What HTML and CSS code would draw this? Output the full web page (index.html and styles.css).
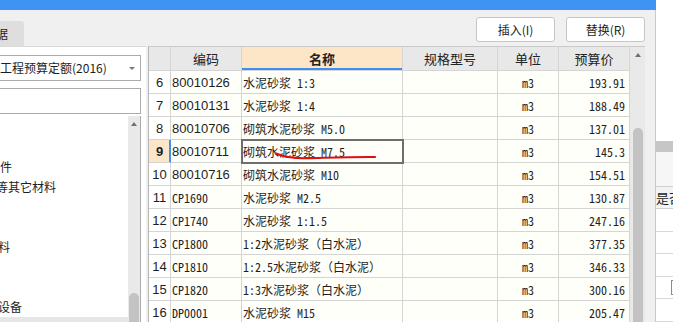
FILE: index.html
```html
<!DOCTYPE html>
<html lang="zh-CN">
<head>
  <meta charset="UTF-8">
  <title>材料替换</title>
  <link rel="stylesheet" href="styles.css">
</head>
<body>
  <div class="screen">
    <div class="window">
      <div class="titlebar"></div>

      <div class="toolbar">
        <div class="tab">据</div>
        <div class="buttons">
          <button class="btn">插入(I)</button>
          <button class="btn">替换(R)</button>
        </div>
      </div>

      <div class="content">
        <div class="left-panel">
          <div class="select">工程预算定额(2016)<span class="caret"></span></div>
          <div class="search"></div>
          <div class="tree">
            <ul class="tree-list">
              <li></li>
              <li></li>
              <li class="near">件</li>
              <li class="deep">等其它材料</li>
              <li></li>
              <li></li>
              <li>料</li>
              <li></li>
              <li></li>
              <li>设备</li>
              <li class="current">专</li>
            </ul>
            <div class="vscroll small">
              <span class="arrow"></span>
              <span class="thumb"></span>
            </div>
          </div>
        </div>

        <div class="grid-wrap">
          <table class="grid">
            <colgroup>
              <col class="c-no">
              <col class="c-code">
              <col class="c-name">
              <col class="c-spec">
              <col class="c-unit">
              <col class="c-price">
            </colgroup>
            <thead>
              <tr>
                <th></th>
                <th>编码</th>
                <th class="sorted">名称</th>
                <th>规格型号</th>
                <th>单位</th>
                <th>预算价</th>
              </tr>
            </thead>
            <tbody>
              <tr>
                <td class="no">6</td><td class="code num">80010126</td><td class="name">水泥砂浆 1:3</td><td></td><td class="unit">m3</td><td class="price">193.91</td>
              </tr>
              <tr>
                <td class="no">7</td><td class="code num">80010131</td><td class="name">水泥砂浆 1:4</td><td></td><td class="unit">m3</td><td class="price">188.49</td>
              </tr>
              <tr>
                <td class="no">8</td><td class="code num">80010706</td><td class="name">砌筑水泥砂浆 M5.0</td><td></td><td class="unit">m3</td><td class="price">137.01</td>
              </tr>
              <tr class="active">
                <td class="no">9</td><td class="code num">80010711</td><td class="name">砌筑水泥砂浆 M7.5</td><td></td><td class="unit">m3</td><td class="price">145.3</td>
              </tr>
              <tr>
                <td class="no">10</td><td class="code num">80010716</td><td class="name">砌筑水泥砂浆 M10</td><td></td><td class="unit">m3</td><td class="price">154.51</td>
              </tr>
              <tr>
                <td class="no">11</td><td class="code">CP1690</td><td class="name">水泥砂浆 M2.5</td><td></td><td class="unit">m3</td><td class="price">130.87</td>
              </tr>
              <tr>
                <td class="no">12</td><td class="code">CP1740</td><td class="name">水泥砂浆 1:1.5</td><td></td><td class="unit">m3</td><td class="price">247.16</td>
              </tr>
              <tr>
                <td class="no">13</td><td class="code">CP1800</td><td class="name">1:2水泥砂浆（白水泥）</td><td></td><td class="unit">m3</td><td class="price">377.35</td>
              </tr>
              <tr>
                <td class="no">14</td><td class="code">CP1810</td><td class="name">1:2.5水泥砂浆（白水泥）</td><td></td><td class="unit">m3</td><td class="price">346.33</td>
              </tr>
              <tr>
                <td class="no">15</td><td class="code">CP1820</td><td class="name">1:3水泥砂浆（白水泥）</td><td></td><td class="unit">m3</td><td class="price">300.16</td>
              </tr>
              <tr>
                <td class="no">16</td><td class="code">DP0001</td><td class="name">水泥砂浆 M15</td><td></td><td class="unit">m3</td><td class="price">205.47</td>
              </tr>
            </tbody>
          </table>
          <div class="vscroll">
            <span class="arrow"></span>
            <span class="thumb"></span>
          </div>
        </div>
      </div>
    </div>

    <div class="side">
      <div class="side-top"></div>
      <div class="side-band"></div>
      <div class="side-bar"></div>
      <div class="side-head">是否</div>
      <div class="side-row"></div>
      <div class="side-row"></div>
      <div class="side-row"></div>
      <div class="side-row"><span class="check"></span></div>
      <div class="side-row"></div>
    </div>
  </div>

  <!-- hand-drawn red underline -->
  <svg class="mark" width="673" height="322" viewBox="0 0 673 322">
    <path d="M276 153.5 C283 156.5 292 158.5 306 158.2 C326 157.8 348 156.8 375 157" fill="none" stroke="#e30d0d" stroke-width="2.2" stroke-linecap="round"/>
  </svg>
</body>
</html>
```

FILE: styles.css
```css
* {
  margin: 0;
  padding: 0;
  box-sizing: border-box;
}

body {
  width: 673px;
  height: 322px;
  overflow: hidden;
  position: relative;
  background: #fff;
  font-family: "Noto Sans CJK SC", sans-serif;
  font-size: 12px;
  color: #1e1e1e;
}

.screen {
  display: flex;
  height: 322px;
}

.window {
  width: 656px;
  display: flex;
  flex-direction: column;
}

.titlebar {
  height: 10px;
  background: #3f93f4;
}

.toolbar {
  height: 36px;
  display: flex;
  justify-content: space-between;
  align-items: flex-start;
  background: #f0f0f0;
  border-right: 1px solid #c9c9c9;
}

.tab {
  margin-top: 11px;
  width: 24px;
  height: 25px;
  line-height: 25px;
  background: #dedede;
  border-top-right-radius: 3px;
  overflow: hidden;
  text-indent: -4px;
  font-size: 12px;
}

.buttons {
  display: flex;
  gap: 11px;
  padding: 7px 10px 0 0;
}

.btn {
  width: 79px;
  height: 25px;
  background: #fff;
  border: 1px solid #c6c6c6;
  border-radius: 3px;
  font-family: "Noto Sans CJK SC", sans-serif;
  font-size: 12px;
  color: #1e1e1e;
}

.content {
  flex: 1;
  display: flex;
  background: #f0f0f0;
  border-right: 1px solid #c9c9c9;
  overflow: hidden;
}

/* left: quota library + tree */
.left-panel {
  width: 146px;
  background: #fff;
  border-top: 1px solid #dadada;
  padding-top: 8px;
  display: flex;
  flex-direction: column;
}

.select,
.search {
  width: 141px;
  height: 26px;
  border: 1px solid #ababab;
  border-left: none;
}

.select {
  position: relative;
  line-height: 24px;
  font-size: 12px;
  white-space: nowrap;
}

.caret {
  position: absolute;
  right: 5px;
  top: 11px;
  border-left: 3px solid transparent;
  border-right: 3px solid transparent;
  border-top: 3px solid #7a7a7a;
}

.search {
  margin-top: 7px;
}

.tree {
  margin-top: 2px;
  width: 141px;
  flex: 1;
  display: flex;
  border-right: 1px solid #ababab;
  overflow: hidden;
}

.tree-list {
  flex: 1;
  list-style: none;
  padding-top: 1px;
}

.tree-list li {
  height: 20px;
  line-height: 20px;
  white-space: nowrap;
  overflow: hidden;
  text-indent: -2px;
}

.tree-list li.near {
  text-indent: 0;
}

.tree-list li.deep {
  text-indent: -4px;
}

.tree-list li.current {
  background: #e6e6e6;
  line-height: 26px;
}

.vscroll {
  width: 15px;
  background: #e9e9e9;
  display: flex;
  flex-direction: column;
  align-items: center;
}

.vscroll.small {
  width: 12px;
}

.vscroll .arrow {
  margin-top: 6px;
  border-left: 3.5px solid transparent;
  border-right: 3.5px solid transparent;
  border-bottom: 4px solid #707070;
}

.vscroll .thumb {
  margin-top: auto;
  width: 10px;
  height: 194px;
  background: #c3c3c3;
  border-radius: 5px 5px 0 0;
}

.vscroll.small .thumb {
  height: 29px;
}

/* right: material grid */
.grid-wrap {
  margin-left: 2px;
  display: flex;
  border-left: 1px solid #b5b5b5;
  border-top: 1px solid #cacaca;
  align-self: stretch;
}

.grid {
  width: 481px;
  table-layout: fixed;
  border-collapse: separate;
  border-spacing: 0;
}

.c-no { width: 22px; }
.c-code { width: 71px; }
.c-name { width: 161px; }
.c-spec { width: 95px; }
.c-unit { width: 61px; }
.c-price { width: 71px; }

.grid th,
.grid td {
  border-right: 1px solid #d5d5d5;
  border-bottom: 1px solid #d5d5d5;
  white-space: nowrap;
  overflow: hidden;
}

.grid thead tr {
  height: 24px;
}

.grid tbody tr {
  height: 23px;
}

.grid th {
  background: #e8e8e8;
  font-weight: normal;
  font-size: 13px;
  color: #222;
}

.grid th.sorted {
  background: #fde5c8;
  font-weight: bold;
  box-shadow: inset 0 -2px 0 #3d8ff2;
}

.grid td {
  background: #fffffa;
  font-family: "Noto Sans Mono CJK SC", "Liberation Mono", "Noto Sans CJK SC", monospace;
  font-size: 12px;
}

.grid td.no {
  background: #fff;
  text-align: center;
  font-family: "Liberation Sans", sans-serif;
  font-size: 13px;
}

.grid td.code {
  padding-left: 1px;
}

.grid td.num {
  font-family: "Liberation Sans", sans-serif;
  font-size: 13px;
}

.grid td.name {
  padding-left: 1px;
}

.grid td.unit {
  text-align: center;
}

.grid td.price {
  text-align: right;
  padding-right: 4px;
}

.grid tr.active td.no {
  background: #fde5c8;
  font-weight: bold;
  border-right-color: #3d8ff2;
  box-shadow: inset -1px 0 0 #3d8ff2;
}

.grid tr.active td.name {
  outline: 2px solid #6e6e6e;
  outline-offset: -1px;
}

/* neighbouring panel at the right edge */
.side {
  flex: 1;
  display: flex;
  flex-direction: column;
  overflow: hidden;
}

.side-top {
  height: 145px;
  background: #fff;
}

.side-band {
  height: 11px;
  background: #c6c6c6;
}

.side-bar {
  height: 35px;
  background: #f6f6f6;
}

.side-head {
  height: 23px;
  line-height: 21px;
  border-top: 1px solid #d0d0d0;
  border-bottom: 1px solid #d0d0d0;
  background: #f3f3f3;
  font-size: 13px;
  white-space: nowrap;
}

.side-row {
  height: 23px;
  border-bottom: 1px solid #d8d8d8;
  padding: 3px 0 0 15px;
}

.check {
  display: block;
  width: 14px;
  height: 15px;
  border: 1px solid #8c8c8c;
  background: #fff;
}

.mark {
  position: absolute;
  left: 0;
  top: 0;
  pointer-events: none;
}
```
